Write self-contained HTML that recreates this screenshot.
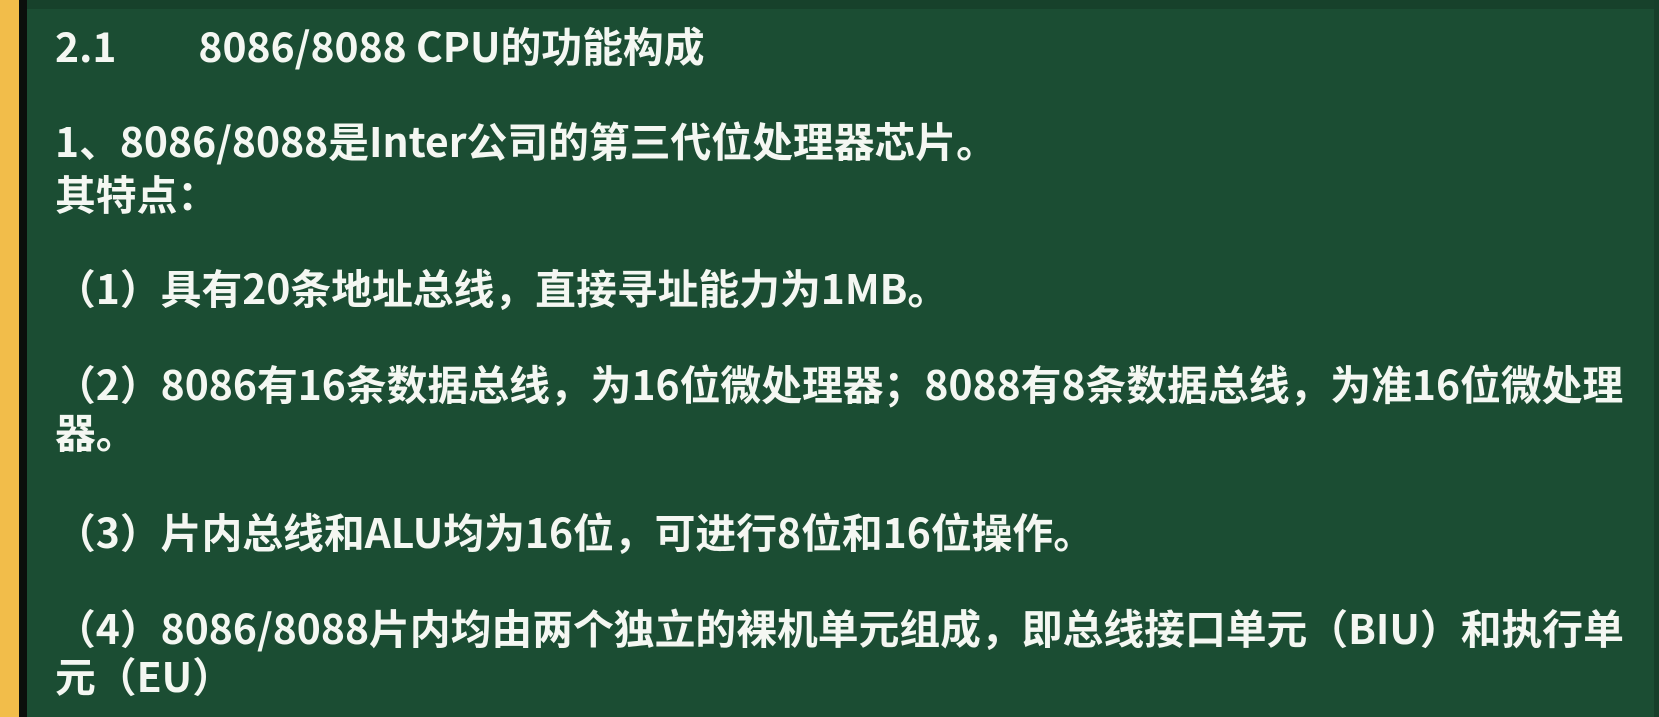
<!DOCTYPE html>
<html><head><meta charset="utf-8"><style>
html,body{margin:0;padding:0}
body{width:1659px;height:717px;overflow:hidden;position:relative;background:#1b4d33;font-family:"Liberation Sans","Noto Sans CJK SC",sans-serif;}
.y{position:absolute;left:0;top:0;width:19px;height:717px;background:#f2bd4a}
.k{position:absolute;left:19px;top:0;width:8px;height:717px;background:#0b0f0c}
.t{position:absolute;left:27px;top:0;right:0;height:9px;background:#17412b}
.r{position:absolute;right:0;top:0;width:5px;height:717px;background:#163f2a}
.l{position:absolute;left:55px;color:#f4f7f2;font-size:40.8px;font-weight:bold;line-height:48px;white-space:nowrap;font-family:"Noto Sans CJK SC","WenQuanYi Zen Hei",sans-serif}
</style></head><body>
<div class="y"></div><div class="k"></div><div class="t"></div><div class="r"></div>
<div class="l" style="top:21px">2.1<span style="display:inline-block;width:82px"></span>8086/8088 CPU的功能构成</div>
<div class="l" style="top:116px">1、8086/8088是Inter公司的第三代位处理器芯片。</div>
<div class="l" style="top:169px">其特点：</div>
<div class="l" style="top:263px">（1）具有20条地址总线，直接寻址能力为1MB。</div>
<div class="l" style="top:359px">（2）8086有16条数据总线，为16位微处理器；8088有8条数据总线，为准16位微处理</div>
<div class="l" style="top:407px">器。</div>
<div class="l" style="top:507px">（3）片内总线和ALU均为16位，可进行8位和16位操作。</div>
<div class="l" style="top:603px">（4）8086/8088片内均由两个独立的裸机单元组成，即总线接口单元（BIU）和执行单</div>
<div class="l" style="top:651px">元（EU）</div>
</body></html>
